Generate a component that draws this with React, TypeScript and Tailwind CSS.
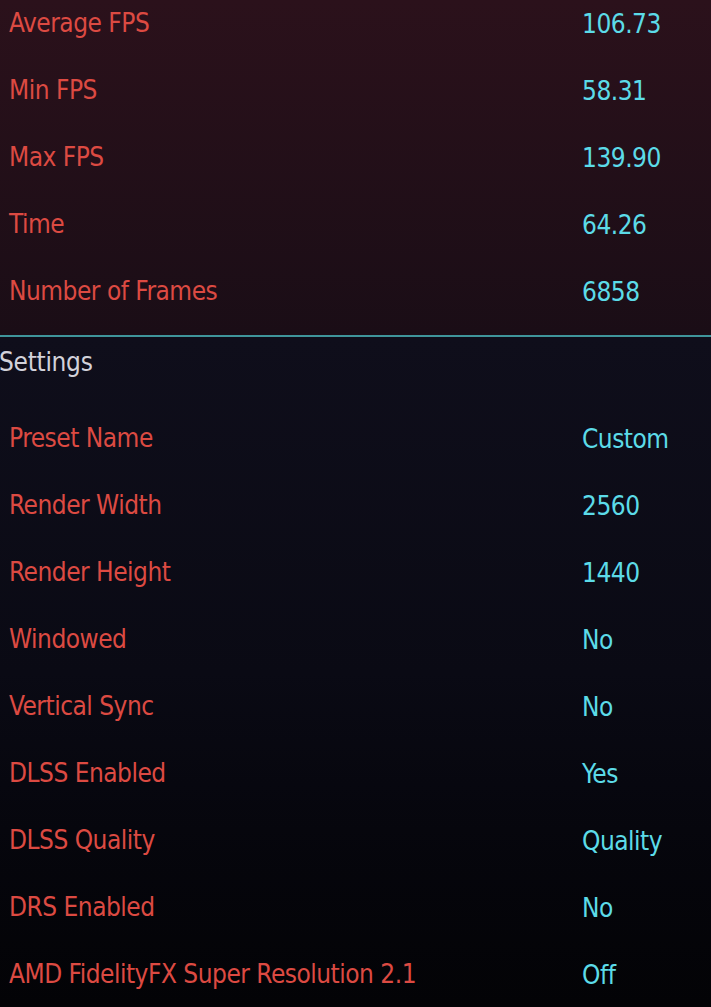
const results = [
  { label: "Average FPS", value: "106.73" },
  { label: "Min FPS", value: "58.31" },
  { label: "Max FPS", value: "139.90" },
  { label: "Time", value: "64.26" },
  { label: "Number of Frames", value: "6858" },
]

const settings = [
  { label: "Preset Name", value: "Custom" },
  { label: "Render Width", value: "2560" },
  { label: "Render Height", value: "1440" },
  { label: "Windowed", value: "No" },
  { label: "Vertical Sync", value: "No" },
  { label: "DLSS Enabled", value: "Yes" },
  { label: "DLSS Quality", value: "Quality" },
  { label: "DRS Enabled", value: "No" },
  { label: "AMD FidelityFX Super Resolution 2.1", value: "Off" },
]

function Row({ label, value }: { label: string; value: string }) {
  return (
    <div className="grid h-[67px] grid-cols-[582px_1fr] items-center">
      <span className="pl-[9px] tracking-[-0.5px] text-[#dc4a42]">{label}</span>
      <span className="pt-[3px] tracking-[-0.5px] text-[#5cdbe8]">{value}</span>
    </div>
  )
}

export default function App() {
  return (
    <div className="flex h-[1007px] w-[711px] flex-col overflow-hidden text-[26px] leading-[32px] font-['Liberation_Sans_Narrow','DejaVu_Sans_Condensed',sans-serif]">
      <div className="bg-gradient-to-b from-[#2b111b] to-[#1a0d16] pb-[11px]">
        <div className="-mt-[11px] flex flex-col">
          {results.map((r) => (
            <Row key={r.label} label={r.label} value={r.value} />
          ))}
        </div>
      </div>
      <div className="h-[2px] bg-[#3f959b]" />
      <div className="flex-1 bg-gradient-to-b from-[#0f0e1b] via-[#0a0a14] to-[#030306]">
        <div className="h-[67px] pt-[9px]">
          <span className="-ml-[1px] tracking-[-0.3px] text-[#d2d2da]">Settings</span>
        </div>
        <div className="flex flex-col">
          {settings.map((s) => (
            <Row key={s.label} label={s.label} value={s.value} />
          ))}
        </div>
      </div>
    </div>
  )
}
